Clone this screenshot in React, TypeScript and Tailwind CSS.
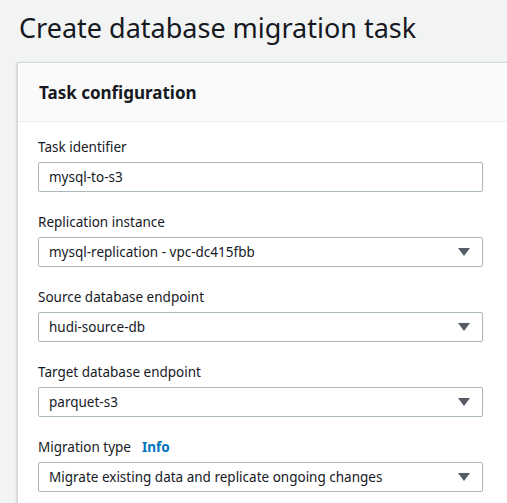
import React from 'react';

const Caret = () => (
  <svg width="12" height="8" viewBox="0 0 12 8" className="shrink-0">
    <path d="M0 0h12L6 8z" fill="#545b64" />
  </svg>
);

type FieldProps = {
  label: string;
  value: string;
  select?: boolean;
  info?: boolean;
};

const Field = ({ label, value, select, info }: FieldProps) => (
  <div className="flex flex-col">
    <div className="flex items-center gap-[11px] h-[20px] text-[13.5px] text-[#16191f]">
      <span>{label}</span>
      {info && <span className="font-bold text-[#0073bb]">Info</span>}
    </div>
    <div className="mt-[5px] flex items-center justify-between h-[30px] w-[445px] px-[10px] pr-[12px] rounded-[2px] border border-[#aab7b8] bg-white text-[13.5px] text-[#16191f]">
      <span>{value}</span>
      {select && <Caret />}
    </div>
  </div>
);

export default function App() {
  return (
    <div
      className="h-[503px] w-[507px] overflow-hidden bg-[#f2f3f3]"
      style={{ fontFamily: '"Noto Sans", "Open Sans", sans-serif' }}
    >
      <h1 className="pl-[19px] pt-[9px] h-[62px] text-[27px] leading-[38px] text-[#16191f]">
        Create database migration task
      </h1>
      <div className="ml-[17px] w-[540px] bg-white border-l border-t border-[#d5dbdb] shadow-[0_1px_2px_rgba(0,28,36,0.3)]">
        <div className="h-[59px] flex items-center pl-[21px] pt-[2px] bg-[#fafafa] border-b border-[#eaeded]">
          <h2 className="text-[17px] font-bold text-[#16191f]">Task configuration</h2>
        </div>
        <div className="pl-[20px] pt-[15px] flex flex-col gap-[20px] pb-[20px]">
          <Field label="Task identifier" value="mysql-to-s3" />
          <Field label="Replication instance" value="mysql-replication - vpc-dc415fbb" select />
          <Field label="Source database endpoint" value="hudi-source-db" select />
          <Field label="Target database endpoint" value="parquet-s3" select />
          <Field label="Migration type" value="Migrate existing data and replicate ongoing changes" select info />
        </div>
      </div>
    </div>
  );
}
